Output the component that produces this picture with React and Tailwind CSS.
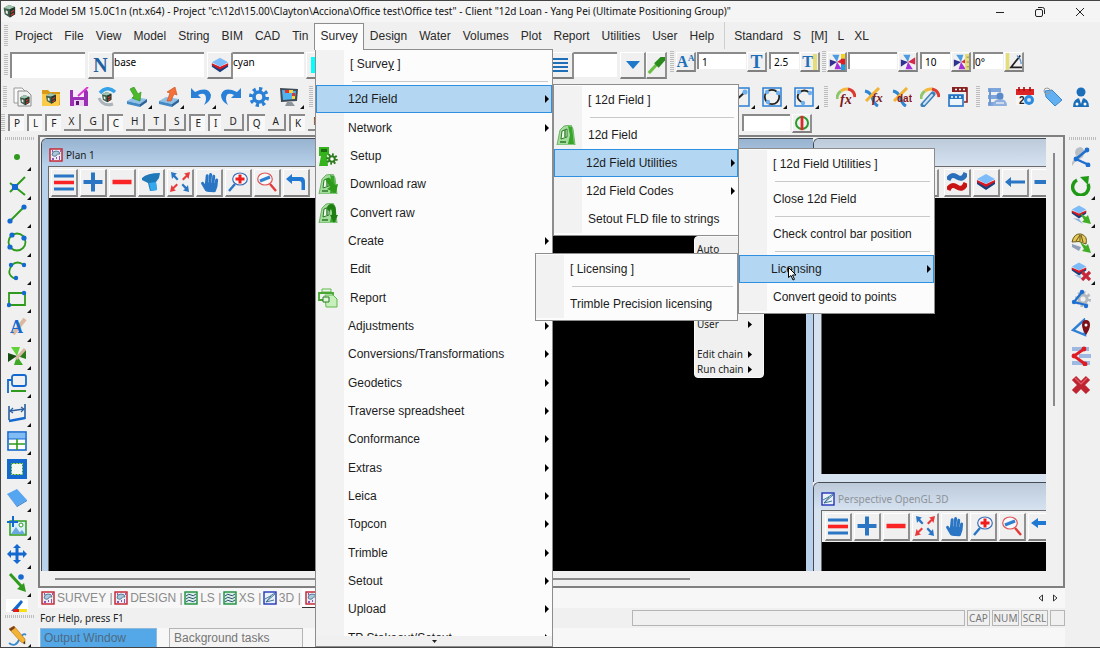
import { FaHandPaper } from "react-icons/fa"

const ui = "font-['Noto_Sans','Open_Sans',sans-serif]"

function Svg({ children, className = "size-[20px]", box = "0 0 20 20" }) {
  return (
    <svg viewBox={box} className={`${className} shrink-0`} fill="none" aria-hidden="true">
      {children}
    </svg>
  )
}

/* ---------- shared drawing parts, all on a 20 x 20 grid ---------- */

const Cube = ({ x = 6, y = 6, s = 1 }) => (
  <g transform={`translate(${x} ${y}) scale(${s})`}>
    <path d="M0 3 L5 0 L11 2 L11 9 L6 12 L1 9Z" fill="#3d5c4c" />
    <path d="M0 3 L5 0 L11 2 L6 4Z" fill="#9fc4b0" />
    <path d="M6 4 L11 2 L11 9 L6 12Z" fill="#22372c" />
    <path d="M2 5 L4 6 L4 9 L2 8Z" fill="#e8f3ec" />
    <path d="M7 7 L10 5 M7 10 L10 8" stroke="#c8372d" strokeWidth="1.3" />
  </g>
)

const Tray = () => (
  <g>
    <path d="M0 14 L7 10 L20 12 L13 17Z" fill="#8fc0e8" />
    <path d="M0 14 L13 17 L13 20 L0 17Z" fill="#4488c4" />
    <path d="M13 17 L20 12 L20 15 L13 20Z" fill="#2c6499" />
  </g>
)

const Layers = ({ y = 0 }) => (
  <g transform={`translate(0 ${y})`}>
    <path d="M1 9 L10 13 L19 9 L19 12 L10 18 L1 12Z" fill="#1b3f7c" />
    <path d="M1 8 L10 12 L19 8 L19 10 L10 15 L1 10Z" fill="#e0161f" />
    <path d="M1 7 L10 2 L19 7 L10 12Z" fill="#7dbcf8" />
  </g>
)

const Magnifier = ({ lens, handle, flip, children }) => (
  <g>
    <g transform={flip ? "translate(20 0) scale(-1 1)" : undefined}>
      <path d="M7 12 L1 19" stroke={handle} strokeWidth="2.4" />
      <ellipse cx="12" cy="7" rx="7.3" ry="6" stroke={lens} strokeWidth="1.2" fill="#f6f9fc" />
    </g>
    {children}
  </g>
)

const Pinwheel = ({ colors = ["#4c9be0", "#d42a4a", "#a431d8", "#31318f"] }) => (
  <g>
    <path d="M4 1 L13 1 L10 10Z" fill={colors[0]} />
    <path d="M19 4 L19 13 L10 10Z" fill={colors[1]} />
    <path d="M7 19 L16 19 L10 10Z" fill={colors[2]} />
    <path d="M1 7 L10 10 L1 16Z" fill={colors[3]} />
  </g>
)

const Station = () => (
  <g>
    <path d="M1 20 L4 5 L8 1 L15 0 L17 4 L19 20Z" fill="#a3dc9c" stroke="#58a650" strokeWidth=".8" />
    <path d="M12 1 L16 2 L18 19 L12 19 L14 10Z" fill="#36a52a" />
    <path d="M6 6 L11 4 L11 12 L5 14Z" fill="#effcec" stroke="#2b7a26" />
    <path d="M9 5v7M4 17h6" stroke="#2b7a26" strokeWidth="1.4" />
  </g>
)

const GearShape = ({ cx = 10, cy = 10, r = 8, w = 4, color = "#2a80d6", hole = "#f0f0f0" }) => (
  <g>
    <circle cx={cx} cy={cy} r={r} stroke={color} strokeWidth={w} pathLength="80" strokeDasharray="5 5" />
    <circle cx={cx} cy={cy} r={r * 0.85} fill={color} />
    <circle cx={cx} cy={cy} r={r * 0.4} fill={hole} />
  </g>
)

const Pencil = () => (
  <g>
    <path d="M2 3 L7 0 L18 13 L18 18 L14 16Z" fill="#f2b233" stroke="#b0741a" strokeWidth=".6" />
    <path d="M16 17 L18 18 L18 15Z" fill="#333" />
    <path d="M2 3 L7 0 L8 2 L4 5Z" fill="#7b3f1d" />
  </g>
)

const Rainbow = () => (
  <g strokeWidth="3">
    <path d="M1 12 A9 9 0 0 1 5 4" stroke="#8fc66a" />
    <path d="M5 4 A9 9 0 0 1 12 2" stroke="#f3b93c" />
    <path d="M12 2 A9 9 0 0 1 19 10" stroke="#dc3b30" />
  </g>
)

const Swoosh = () => <path d="M1 4 Q6 5 8 10 Q10 17 14 19" stroke="#2f86d2" strokeWidth="3" />

const Dots = ({ at, color = "#1469d0", r = 2.6 }) =>
  at.map(([x, y]) => <circle key={`${x}-${y}`} cx={x} cy={y} r={r} fill={color} />)

const PlanBadge = () => (
  <Svg className="size-[14px]" box="0 0 14 14">
    <rect x="1" y="1" width="12" height="12" fill="#e9eef3" stroke="#c41f2c" strokeWidth="1.4" />
    <path d="M3 7 Q3 3 7 3 Q11 3 11 6 Q8 5 7 8 Q5 9 3 7Z" fill="#a9c8dd" stroke="#375a75" strokeWidth=".7" />
    <path d="M3 11h2M7 10h1M10 9h1M10 11h1M3 3h1M11 3h1" stroke="#7b1fa2" strokeWidth="1.4" />
  </Svg>
)

const SectionBadge = () => (
  <Svg className="size-[14px]" box="0 0 14 14">
    <rect x="1" y="1" width="12" height="12" fill="#d9efe4" stroke="#1a8f3c" strokeWidth="1.4" />
    <path d="M2 5 Q5 2 7 4 T12 3 M2 8 Q5 5 7 7 T12 6 M2 11 Q5 8 7 10 T12 9" stroke="#2d4f78" />
  </Svg>
)

const ViewBadge = () => (
  <Svg className="size-[14px]" box="0 0 14 14">
    <rect x="1" y="1" width="12" height="12" fill="#eaf0fa" stroke="#2334b8" strokeWidth="1.4" />
    <path d="M3 11 L12 3 M3 11 L8 5 M3 11 L11 9 M2 8 Q6 6 12 2" stroke="#2f6a8c" strokeWidth=".9" />
  </Svg>
)

/* ---------- icon table ---------- */

const blue = "#1469d0"
const green = "#2f9a1c"

const icons = {
  newProject: (
    <g>
      <path d="M1 1h8l3 3v12H1z" fill="#fafafa" stroke="#9a9a9a" />
      <path d="M5 4h9l4 4v11H5z" fill="#f1f1f1" stroke="#8b8b8b" />
      <Cube x={7} y={8} s={0.85} />
    </g>
  ),
  open: (
    <g>
      <path d="M1 3h6l2 2h10v13H1z" fill="#d99a18" />
      <path d="M1 7h18l-1 12H1z" fill="#fbca49" />
      <Cube x={5} y={6} s={0.9} />
    </g>
  ),
  save: (
    <g>
      <path d="M1 3h17l1 2v14H1z" fill="#9b2fb5" />
      <path d="M4 3h11v7H4z" fill="#f6ecf9" />
      <path d="M5 13h10v6H5z" fill="#e9d3ef" />
      <path d="M7 14h3v4H7z" fill="#5d1470" />
      <path d="M19 0 L9 9" stroke="#d63ad0" strokeWidth="2" />
    </g>
  ),
  refresh: (
    <g>
      <path d="M3 6 Q10 -2 18 5" stroke="#37a2e8" strokeWidth="3.5" />
      <path d="M2 11 Q6 20 16 17" stroke="#aab3ba" strokeWidth="3" />
      <Cube x={5} y={5} s={0.85} />
    </g>
  ),
  importData: (
    <g>
      <Tray />
      <path d="M3 2 L7 0 L11 7 L14 5 L13 14 L5 11 L7 9Z" fill="#4cba2a" stroke="#2c8a15" strokeWidth=".6" />
    </g>
  ),
  exportData: (
    <g>
      <Tray />
      <path d="M8 14 L12 14 L15 7 L18 8 L16 0 L8 5 L11 6Z" fill="#f4713a" stroke="#c84a18" strokeWidth=".6" />
    </g>
  ),
  undo: <path d="M0 1 L0 11 L10 11 L7 8 Q15 4 15 12 Q15 15 13 18 Q20 14 20 8 Q17 -1 4 5Z" fill="#2a80d6" />,
  redo: <path d="M20 1 L20 11 L10 11 L13 8 Q5 4 5 12 Q5 15 7 18 Q0 14 0 8 Q3 -1 16 5Z" fill="#2a80d6" />,
  gear: <GearShape />,
  monitor: (
    <g>
      <path d="M1 1 L19 2 L18 14 L2 15Z" fill="#3e4b57" />
      <path d="M3 3 L17 4 L16 12 L4 13Z" fill="#4fb3f0" />
      <path d="M6 3h4v3H6z" fill="#e23232" />
      <path d="M10 3h4v3h-4z" fill="#f7d53a" />
      <path d="M13 6h3v3h-3z" fill="#e23232" />
      <path d="M13 9h3v3h-3z" fill="#f7d53a" />
      <path d="M8 15h5l3 4H6z" fill="#8e969d" />
    </g>
  ),
  boxLine: (
    <g>
      <rect x="1" y="1" width="18" height="18" stroke="#2a7fd4" strokeWidth="1.5" />
      <path d="M3 16 L15 5" stroke="#222" strokeWidth="2" />
      <Dots at={[[15, 5], [4, 16]]} color="#6fb0ee" />
    </g>
  ),
  boxCircle: (
    <g>
      <rect x="1" y="1" width="18" height="18" stroke="#2a7fd4" strokeWidth="1.5" />
      <circle cx="10" cy="10" r="7.2" stroke="#222" strokeWidth="1.8" />
      <Dots at={[[5, 5], [16, 6], [6, 15]]} color="#6fb0ee" r={2.2} />
    </g>
  ),
  boxArc: (
    <g>
      <rect x="1" y="1" width="18" height="18" stroke="#2a7fd4" strokeWidth="1.5" />
      <path d="M16 6 Q10 1 5 6 Q1 12 9 16" stroke="#222" strokeWidth="1.8" />
      <Dots at={[[5, 5], [16, 6], [9, 16]]} color="#6fb0ee" r={2.2} />
    </g>
  ),
  rainbowFx: (
    <g>
      <Rainbow />
      <text x="4" y="17" fontSize="14" fontWeight="700" fontStyle="italic" fontFamily="Liberation Serif" fill="#7c1a1a">fx</text>
    </g>
  ),
  pencilFx: (
    <g>
      <Swoosh />
      <path d="M2 14 L15 1" stroke="#f2b233" strokeWidth="3" />
      <text x="8" y="15" fontSize="13" fontWeight="700" fontStyle="italic" fontFamily="Liberation Serif" fill="#7c1a1a">fx</text>
    </g>
  ),
  pencilDat: (
    <g>
      <Swoosh />
      <path d="M2 14 L15 1" stroke="#f2b233" strokeWidth="3" />
      <text x="5" y="15" fontSize="10" fontWeight="700" fontFamily="Liberation Sans" fill="#8a1717">dat</text>
    </g>
  ),
  rainbowLink: (
    <g>
      <Rainbow />
      <path d="M3 18 L13 7" stroke="#3d7fb8" strokeWidth="5" strokeLinecap="round" />
      <path d="M4 17 L12 8" stroke="#cfe3f2" strokeWidth="2" strokeLinecap="round" />
    </g>
  ),
  windows: (
    <g>
      <path d="M4 1h15v14h-3" stroke="#8a2020" strokeWidth="1.6" />
      <path d="M4 0h15v5H4z" fill="#8a2020" />
      <path d="M7 2.500h2M11 2.500h2M15 2.500h2" stroke="#fff" strokeWidth="1.6" />
      <rect x="1" y="8" width="14" height="11" fill="#eef5fb" stroke="#2274c4" strokeWidth="1.6" />
      <path d="M1 8h14v4H1z" fill="#2274c4" />
      <path d="M3 10h2M7 10h2M11 10h2" stroke="#fff" strokeWidth="1.6" />
    </g>
  ),
  cards: (
    <g>
      <path d="M1 1h13v4H1zM1 8h15v4H1zM1 15h12v4H1z" fill="#7fa6dc" />
      <path d="M3 2v16" stroke="#6f97cf" strokeWidth="2" />
      <path d="M6 19 Q6 12 13 12 Q20 12 20 19Z" fill="#8fb0dd" />
      <circle cx="13" cy="9" r="3.500" fill="#5b89c9" />
      <path d="M9 16h8" stroke="#dfe9f6" strokeWidth="1.5" />
    </g>
  ),
  calendar: (
    <g>
      <path d="M1 2h18v16H1z" fill="#f6f6f6" />
      <path d="M1 2h18v6H1z" fill="#dc2424" />
      <path d="M4 0v4M9 0v4M15 0v4" stroke="#a31010" strokeWidth="1.6" />
      <text x="4" y="17" fontSize="10" fontWeight="700" fontFamily="Liberation Sans" fill="#222">2</text>
      <circle cx="14" cy="13" r="5" fill="#2c8be0" />
      <circle cx="14" cy="13" r="2" fill="#cfe6fa" />
    </g>
  ),
  tag: (
    <g>
      <path d="M2 4 L9 3 L19 13 L12 19 L3 10Z" fill="#62b0f2" stroke="#3b86cb" />
      <circle cx="4" cy="4" r="3" stroke="#9a9a9a" />
    </g>
  ),
  person: (
    <g>
      <circle cx="10" cy="5" r="4.500" fill="#1b6fb8" />
      <path d="M2 20 Q2 11 10 11 Q18 11 18 20Z" fill="#1b6fb8" />
      <path d="M8 11l2 6 2-6" fill="#f0f0f0" />
      <circle cx="6" cy="17" r="1.500" fill="#fff" />
      <circle cx="14" cy="17" r="1.500" fill="#fff" />
    </g>
  ),

  /* view window buttons */
  menu: (
    <g strokeWidth="3.2">
      <path d="M0 4h20M0 17h20" stroke="#2a76c4" />
      <path d="M0 10.500h20" stroke="#fb2424" strokeWidth="3.600" />
    </g>
  ),
  plus: <path d="M10 0.500v19M0.500 10h19" stroke="#2a76c4" strokeWidth="4" />,
  minus: <path d="M0.500 10h19" stroke="#fb2424" strokeWidth="4.500" />,
  funnel: (
    <g>
      <path d="M1 6 Q6 1 19 1 L18 6 L15 10 L16 18 L9 19 L7 11 L1 8Z" fill="#1f78b8" />
      <path d="M8 11 L15 10 L16 18 L10 19Z" fill="#35a9ee" />
    </g>
  ),
  fit: (
    <g>
      <path d="M1 0 L7 1.500 L5 3 L8.500 7 L7 8.500 L3.500 5 L2 7Z M19 20 L13 18.500 L15 17 L11.500 13 L13 11.500 L16.500 15 L18 13Z" fill="#2a76c4" />
      <path d="M20 0 L14 1.500 L16 3 L12 7 L13.500 8.500 L17 5 L18.500 7Z M0 20 L6 18.500 L4 17 L8 13 L6.500 11.500 L3 15 L1.500 13Z" fill="#e83a3a" />
    </g>
  ),
  zoomIn: (
    <Magnifier lens="#3f6fb5" handle="#2a76c4">
      <path d="M12 2.500v9M7.500 7h9" stroke="#f01c1c" strokeWidth="3" />
    </Magnifier>
  ),
  zoomOut: (
    <Magnifier lens="#e25555" handle="#e23a3a" flip>
      <path d="M3 9 L13 5" stroke="#2f7fd0" strokeWidth="3" />
    </Magnifier>
  ),
  back: <path d="M0 7 L6 2 L6 5 L15 5 Q19 5 19 10 L19 18 L15.500 18 L15.500 11 Q15.500 9 13 9 L6 9 L6 12Z" fill="#1f78d1" />,
  backCut: <path d="M0 7 L7 2 L7 5 L20 5 L20 9 L7 9 L7 12Z" fill="#1f78d1" />,
  arrowLeft: <path d="M0 10 L6 5 L6 8.500 L20 8.500 L20 11.500 L6 11.500 L6 15Z" fill="#2a76c4" />,
  waves: (
    <g strokeWidth="5">
      <path d="M1 8 Q4 1 10 5 T19 1" stroke="#2a6fbb" />
      <path d="M1 18 Q4 11 10 15 T19 11" stroke="#c81414" />
    </g>
  ),
  layers: <Layers />,
  dash: <path d="M0.500 10h19" stroke="#2a76c4" strokeWidth="4" />,

  /* left tool column */
  point: <circle cx="10" cy="10" r="3" fill="#2f9a1c" />,
  vertex: (
    <g>
      <path d="M3 7 L8 11 L18 1 M8 11 L3 16 M8 11 L18 19" stroke={green} strokeWidth="2" />
      <path d="M5 8h6v6H5z" fill={blue} />
    </g>
  ),
  line: (
    <g>
      <path d="M3 17 L17 3" stroke={green} strokeWidth="2" />
      <Dots at={[[3, 17], [17, 3]]} />
    </g>
  ),
  circle: (
    <g>
      <circle cx="10" cy="10" r="8.500" stroke={green} strokeWidth="1.800" />
      <Dots at={[[5, 3], [17, 6], [3, 15]]} />
    </g>
  ),
  arc: (
    <g>
      <path d="M17 4 Q10 -1 5 4 Q-2 14 9 18" stroke={green} strokeWidth="1.800" />
      <Dots at={[[4, 4], [17, 4], [9, 17]]} r={2.2} />
    </g>
  ),
  rect: (
    <g>
      <path d="M2 4h16v12H2z" stroke={green} strokeWidth="1.800" />
      <Dots at={[[17, 4], [2, 16]]} r={2.2} />
    </g>
  ),
  text: (
    <g>
      <path d="M6 17 L18 2" stroke="#dcb8a0" strokeWidth="4" />
      <text x="3" y="16" fontSize="18" fontWeight="700" fontFamily="Liberation Serif" fill={blue}>A</text>
    </g>
  ),
  symbol: (
    <g>
      <Pinwheel colors={["#63d13a", "#2b7a1c", "#3fa828", "#174d10"]} />
      <path d="M9 13 L18 3" stroke="#d8b79f" strokeWidth="3" />
    </g>
  ),
  leader: (
    <g>
      <rect x="5" y="1" width="14" height="11" rx="2" stroke={blue} strokeWidth="1.800" />
      <path d="M5 6H1v13" stroke={blue} strokeWidth="1.800" />
      <path d="M4 17h15" stroke={green} strokeWidth="2" />
    </g>
  ),
  dimension: (
    <g stroke="#2a5fa0">
      <path d="M2 3v14M18 1v15M3 8 L17 6" strokeWidth="1.600" />
      <path d="M6 5 L3 8 L6 10M14 4 L17 6 L14 9" strokeWidth="1.200" />
      <path d="M2 18 L18 15" stroke={blue} strokeWidth="2.500" />
    </g>
  ),
  table: (
    <g>
      <rect x="1" y="1" width="18" height="18" fill="#fff" stroke={blue} strokeWidth="1.600" />
      <path d="M2 2h16v6H2z" fill="#7fbcf5" />
      <path d="M1 8h18" stroke={blue} />
      <path d="M10 8v11M2 13h16" stroke={green} strokeWidth="1.600" />
    </g>
  ),
  frame: (
    <g>
      <rect x="2" y="2" width="16" height="16" fill="#f4f8f2" stroke={blue} strokeWidth="4" />
      <rect x="4.500" y="4.500" width="11" height="11" stroke={green} strokeDasharray="2 1" />
    </g>
  ),
  plane: (
    <g>
      <path d="M0 6 L10 1 L20 12 L10 18Z" fill="#56a5f0" />
      <path d="M20 12 L10 18 L0 6 L10 19 L20 13Z" fill="#2c74c4" />
    </g>
  ),
  image: (
    <g>
      <rect x="3" y="5" width="16" height="14" fill="#d9efff" stroke={green} strokeWidth="1.500" />
      <path d="M4 18 L9 11 L14 18Z M11 18 L15 14 L18 18Z" fill="#6aa9e0" />
      <circle cx="14" cy="9" r="2" fill="#fff" stroke={green} />
      <path d="M6 0v11M0 6h11" stroke={blue} strokeWidth="2" />
    </g>
  ),
  move: (
    <g>
      <path d="M10 2v16M2 10h16" stroke={blue} strokeWidth="3" />
      <path d="M10 0l4 4H6zM10 20l4-4H6zM0 10l4-4v8zM20 10l-4-4v8z" fill={blue} />
    </g>
  ),
  translate: (
    <g>
      <path d="M3 1 L15 14" stroke={green} strokeWidth="3" />
      <path d="M19 19 L10 16 L17 10Z" fill={green} />
      <circle cx="14" cy="4" r="2.800" fill={blue} />
    </g>
  ),
  sketch: (
    <g>
      <path d="M2 17 Q8 22 12 14 T19 9" stroke="#3a8ad0" strokeWidth="1.800" />
      <Pencil />
    </g>
  ),

  /* right tool column */
  nodeGray: (
    <g>
      <path d="M4 6 Q4 0 10 0 Q15 2 12 10 L4 15 L1 19 Q0 13 6 11Z" fill="#b9bec4" />
      <path d="M16 3 L5 12 L18 18" stroke="#1f6fd0" strokeWidth="2.4" />
      <Dots at={[[16, 3], [5, 12], [17, 18]]} r={2.4} color="#1f6fd0" />
    </g>
  ),
  reload: (
    <g>
      <path d="M6 4 A8 8 0 1 0 17 8" stroke="#1f9a14" strokeWidth="3.500" />
      <path d="M9 1 L18 0 L17 9Z" fill="#1f9a14" />
    </g>
  ),
  layerGo: (
    <g>
      <g transform="scale(.8)"><Layers /></g>
      <path d="M2 14 L12 20 L8 15Z" fill="#8fb0dd" />
      <path d="M9 9 L15 13 L17 11 L20 20 L11 18 L13 16Z" fill="#3fae24" />
    </g>
  ),
  shellGo: (
    <g>
      <path d="M1 9 Q3 0 10 1 Q17 3 15 11 Q8 7 1 9Z" fill="#e3c85a" stroke="#6b5817" />
      <path d="M5 8 L9 2 L9 8 M12 9 L10 2" stroke="#6b5817" />
      <path d="M1 11 L10 14 L8 18 L1 14Z" fill="#8f9fb5" />
      <path d="M9 9 L15 13 L17 11 L20 20 L11 18 L13 16Z" fill="#3fae24" />
    </g>
  ),
  layerDelete: (
    <g>
      <g transform="scale(.8)"><Layers /></g>
      <path d="M3 14 L12 19 L9 14Z" fill="#a9c3e4" />
      <path d="M11 11 L19 19 M19 11 L11 19" stroke="#c6283a" strokeWidth="3.200" />
    </g>
  ),
  nodeGear: (
    <g>
      <GearShape cx={12} cy={10} r={6.5} w={3} color="#b3b9bf" />
      <path d="M11 3 L3 13 L15 16" stroke="#1f6fd0" strokeWidth="2.2" />
      <Dots at={[[11, 3], [3, 13], [15, 17]]} r={2.2} color="#1f6fd0" />
    </g>
  ),
  nodePin: (
    <g>
      <path d="M13 2 L2 12 L14 17Z" stroke="#2f7fd6" strokeWidth="2.400" />
      <path d="M11 7 Q11 2 15 2 Q19 2 19 7 Q19 11 15 17 Q11 11 11 7Z" fill="#7d0f18" />
      <circle cx="15" cy="7" r="1.500" fill="#fff" />
    </g>
  ),
  nodeRed: (
    <g>
      <path d="M1 1h17v4H1zM8 8h12v4H8zM1 15h18v4H1z" fill="#9db9e2" />
      <path d="M13 3 L3 10 L14 18" stroke="#dd1c24" strokeWidth="2.800" />
      <Dots at={[[13, 3], [3, 10], [14, 18]]} r={2.4} color="#dd1c24" />
    </g>
  ),
  cross: (
    <g>
      <path d="M3 3 L17 17 M17 3 L3 17" stroke="#bf2431" strokeWidth="6" />
      <path d="M4 3 L10 9 L16 3" stroke="#e0616b" strokeWidth="1.200" />
    </g>
  ),

  /* survey menu */
  setup: (
    <g>
      <path d="M1 1h10v8H9l1 11H1l2-10H1z" fill="#35b31c" />
      <path d="M3 3h6v3H3z" fill="#1c6b10" />
      <GearShape cx={14} cy={13} r={4.500} w={2.500} color="#2d7a1f" hole="#fff" />
    </g>
  ),
  station: <Station />,
  download: (
    <g>
      <Station />
      <path d="M7 5 L12 4 L16 11 L20 10 L18 19 L9 15 L12 13Z" fill="#2e9a1a" />
    </g>
  ),
  convert: (
    <g>
      <Station />
      <path d="M9 6 Q9 1 14 1 Q18 2 18 8 L18 12 L20 12 L16 20 L12 12 L14 12 L14 7 Q12 5 12 9Z" fill="#1f7f12" />
    </g>
  ),
  report: (
    <g>
      <path d="M4 1h9v3H4z" stroke="#5fb84a" />
      <path d="M1 5h14v7H1z" stroke="#48a832" strokeWidth="1.800" />
      <path d="M7 7h8l4 4v8H8z" fill="#c8f0bd" stroke="#5fb84a" />
      <path d="M5 9h6v5H5z" fill="#dff7d8" stroke="#2b7a26" />
    </g>
  ),
}

/* ---------- small building blocks ---------- */

const Grip = ({ className }) => (
  <div className={`flex shrink-0 items-center justify-center ${className}`}>
    <div className="h-[22px] w-[4px] bg-[repeating-linear-gradient(180deg,#bdbdbd_0_1px,#f0f0f0_1px_2px)]" />
  </div>
)

const raised = "border-t border-l border-r-2 border-b-2 border-t-white border-l-white border-r-[#909090] border-b-[#808080] bg-[#f0f0f0]"

function Tool({ icon, label, corner, className = "" }) {
  return (
    <button aria-label={label || icon} className={`relative flex shrink-0 items-center justify-center ${className}`}>
      <Svg>{icons[icon]}</Svg>
      {corner && (
        <Svg className="absolute right-[1px] bottom-0 size-[4px]" box="0 0 4 4">
          <path d="M4 0v4H0z" fill="#111" />
        </Svg>
      )}
    </button>
  )
}

function SmallButton({ label, children, className = "h-[20px] w-[20px]" }) {
  return (
    <button aria-label={label} className={`flex shrink-0 items-center justify-center ${raised} ${className}`}>
      {children}
    </button>
  )
}

function Field({ label, value = "", className = "" }) {
  return (
    <input
      aria-label={label}
      defaultValue={value}
      className={`shrink-0 border-t-2 border-[#8a8a8a] bg-white text-[10px] text-black outline-none ${ui} ${className}`}
    />
  )
}

function ViewButton({ icon }) {
  return (
    <button aria-label={icon} className={`flex h-[28px] w-[27px] shrink-0 items-center justify-center ${raised}`}>
      {icon === "hand" ? <FaHandPaper className="size-[19px] rotate-6 text-[#2a76c4]" /> : <Svg>{icons[icon]}</Svg>}
    </button>
  )
}

function ViewWindow({ title, badge, tools, active, className = "", frame }) {
  return (
    <section className={`flex min-h-0 min-w-0 flex-col overflow-hidden rounded-tl-md border-t border-l border-[#454b52] ${frame} ${className}`}>
      <header
        className={`flex h-[27px] shrink-0 items-center gap-[3px] bg-linear-to-b pt-[5px] text-[10px] ${ui} ${
          active ? "from-[#97b3d0] to-[#b9d1ea] text-[#1a1a1a]" : "from-[#bccada] to-[#d6e2f0] text-[#8e9399]"
        } pl-[7px]`}
      >
        {badge}
        <h2>{title}</h2>
      </header>
      <div className={`flex min-h-0 flex-1 ${active ? "pr-[7px] pl-[6px]" : "pl-[7px]"}`}>
        <div className="flex min-w-0 flex-1 flex-col border-t border-l border-[#6b6b6b]">
          <div className={`flex h-[31px] shrink-0 items-center gap-[2px] overflow-hidden bg-[#f0f0f0] ${active ? "pl-[2px]" : "pl-[3px]"}`}>
            {tools.map((tool, i) => (tool === "|" ? <i key={i} className="w-[1px] shrink-0" /> : <ViewButton key={i} icon={tool} />))}
          </div>
          <div className="flex-1 bg-black" />
        </div>
      </div>
    </section>
  )
}

function MenuItem({ label, icon, sub, open, className = "h-[28px]" }) {
  return (
    <button
      role="menuitem"
      className={`flex w-full items-center text-left text-xs whitespace-nowrap text-[#1c1c1c] ${
        open ? "bg-[#b3d7f3] outline outline-offset-[-1px] outline-[#2f8fe0]" : "bg-[#fcfcfc]"
      } ${className}`}
    >
      <span className={`flex w-[28px] shrink-0 items-center self-stretch pl-[2px] ${open ? "" : "bg-[#f2f2f2]"}`}>
        {icon && <Svg>{icons[icon]}</Svg>}
      </span>
      <span className={`flex-1 ${sub ? "pl-[4px]" : "pl-[6px]"}`}>{label}</span>
      {sub && (
        <Svg className="mr-[2px] h-[8px] w-[5px]" box="0 0 5 8">
          <path d="M0 0l4 4-4 4z" fill="#000" />
        </Svg>
      )}
    </button>
  )
}

const Separator = () => (
  <div className="flex h-[7px] w-full shrink-0 items-center bg-[#fcfcfc] pr-[4px]">
    <span className="w-[28px] shrink-0 self-stretch bg-[#f2f2f2]" />
    <span className="ml-[8px] h-[1px] flex-1 bg-[#c9c9c9]" />
  </div>
)

function PopupMenu({ items, className }) {
  return (
    <div role="menu" className={`absolute border border-[#8d8d8d] bg-[#fcfcfc] pt-px pb-[2px] ${className}`}>
      {items.map((item, i) => (item === "-" ? <Separator key={i} /> : <MenuItem key={i} {...item} />))}
    </div>
  )
}

/* ---------- data ---------- */

const menuBar = ["Project", "File", "View", "Model", "String", "BIM", "CAD", "Tin", "Survey", "Design", "Water", "Volumes", "Plot", "Report", "Utilities", "User", "Help"]
const layoutBar = ["Standard", "S", "[M]", "L", "XL"]

const mainTools = [
  ["newProject"], ["open"], ["save"], ["refresh"], ["importData", true], ["exportData", true],
  ["undo", true], ["redo"], ["gear"], ["monitor", true],
]

const snaps = [
  ["P", true], ["L", true], ["F", true], ["X"], ["G"], ["C", true], ["H"], ["T"], ["S"],
  ["E", true], ["I", true], ["D"], ["Q", true], ["A"], ["K", true], ["M"],
]

const drawTools = ["point", "vertex", "line", "circle", "arc", "rect", "text", "symbol", "leader", "dimension", "table", "frame", "plane", "image", "move", "translate"]
const editTools = ["nodeGray", "reload", "layerGo", "shellGo", "layerDelete", "nodeGear", "nodePin", "nodeRed", "cross"]

const surveyItems = [
  { label: "12d Field", sub: true, open: true },
  { label: "Network", sub: true },
  { label: "Setup", icon: "setup" },
  { label: "Download raw", icon: "download" },
  { label: "Convert raw", icon: "convert" },
  { label: "Create", sub: true },
  { label: "Edit" },
  { label: "Report", icon: "report" },
  { label: "Adjustments", sub: true },
  { label: "Conversions/Transformations", sub: true },
  { label: "Geodetics", sub: true },
  { label: "Traverse spreadsheet", sub: true },
  { label: "Conformance", sub: true },
  { label: "Extras", sub: true },
  { label: "Leica", sub: true },
  { label: "Topcon", sub: true },
  { label: "Trimble", sub: true },
  { label: "Setout", sub: true },
  { label: "Upload", sub: true },
  { label: "TP Stakeout/Setout", sub: true },
]

const fieldItems = [
  { label: "[ 12d Field ]" },
  "-",
  { label: "12d Field", icon: "station" },
  { label: "12d Field Utilities", sub: true, open: true },
  { label: "12d Field Codes", sub: true },
  { label: "Setout FLD file to strings" },
]

const utilityItems = [
  { label: "[ 12d Field Utilities ]" },
  "-",
  { label: "Close 12d Field" },
  "-",
  { label: "Check control bar position" },
  "-",
  { label: "Licensing", sub: true, open: true },
  { label: "Convert geoid to points" },
]

const licensingItems = [{ label: "[ Licensing ]" }, "-", { label: "Trimble Precision licensing" }]

const viewTabs = [
  ["SURVEY", <PlanBadge />],
  ["DESIGN", <PlanBadge />],
  ["LS", <SectionBadge />],
  ["XS", <SectionBadge />],
  ["3D", <ViewBadge />],
]

/* ---------- page sections ---------- */

function TitleBar() {
  return (
    <header className="flex h-[21px] shrink-0 items-center bg-[#f5f5f5] pl-[2px]">
      <Svg className="size-[13px]">
        <Cube x={1} y={0} s={1.6} />
      </Svg>
      <h1 className={`flex-1 pl-[3px] text-[10px] whitespace-nowrap text-[#111] ${ui}`}>
        {'12d Model 5M 15.0C1n (nt.x64) - Project "c:\\12d\\15.00\\Clayton\\Acciona\\Office test\\Office test" - Client "12d Loan - Yang Pei (Ultimate Positioning Group)"'}
      </h1>
      <div className="flex">
        <button aria-label="Minimize" className="flex w-[40px] justify-center">
          <Svg className="size-[10px]" box="0 0 10 10"><path d="M1 5.500h8" stroke="#222" /></Svg>
        </button>
        <button aria-label="Restore" className="flex w-[40px] justify-center">
          <Svg className="size-[10px]" box="0 0 10 10">
            <rect x=".5" y="2.500" width="7" height="7" rx="1.500" stroke="#222" />
            <path d="M3 .5h4.500q2 0 2 2V7" stroke="#222" />
          </Svg>
        </button>
        <button aria-label="Close" className="flex w-[40px] justify-center">
          <Svg className="size-[10px]" box="0 0 10 10"><path d="M1 1l8 8M9 1L1 9" stroke="#222" /></Svg>
        </button>
      </div>
    </header>
  )
}

function MenuBar() {
  return (
    <nav className="flex h-[27px] shrink-0 items-stretch pl-[2px] text-xs text-[#2a2a2a]">
      <Grip className="w-[6px]" />
      {menuBar.map((name) => (
        <button
          key={name}
          className={
            name === "Survey"
              ? "z-20 mt-[1px] mb-[-1px] border border-b-0 border-[#8d8d8d] bg-[#fcfcfc] px-[5px] pb-[2px]"
              : "px-[6px]"
          }
        >
          {name}
        </button>
      ))}
      <div className="mx-[4px] w-[1px] bg-[#cfcfcf]" />
      {layoutBar.map((name) => (
        <button key={name} className="px-[5px]">{name}</button>
      ))}
    </nav>
  )
}

function PropertyBar() {
  return (
    <div className="flex h-[32px] shrink-0 items-start pt-[3px]">
      <div className="flex w-[544px] shrink-0 items-start">
        <Grip className="h-[26px] w-[9px]" />
        <Field label="String name" className="mr-[3px] h-[26px] w-[75px] border-l-2" />
        <SmallButton label="Name list" className="h-[27px] w-[26px]">
          <span className="font-['Liberation_Serif',serif] text-xl font-bold text-[#1f5f9e]">N</span>
        </SmallButton>
        <Field label="Name" value="base" className="mr-[3px] h-[25px] w-[90px] pb-[7px]" />
        <SmallButton label="Colour list" className="h-[27px] w-[26px]">
          <Svg className="size-[18px]">{icons.layers}</Svg>
        </SmallButton>
        <Field label="Colour" value="cyan" className="mr-[2px] h-[25px] w-[71px] pb-[7px]" />
        <SmallButton label="Pick colour" className="h-[27px] w-[27px]">
          <span className="size-[16px] bg-[#00ffff]" />
        </SmallButton>
      </div>
      <SmallButton label="Line style" className="h-[27px] w-[29px]">
        <Svg className="h-[16px] w-[18px]" box="0 0 18 16">
          <path d="M0 2h18M0 6h18M0 10h18M0 14h18" stroke="#1f6fb8" strokeWidth="2" />
        </Svg>
      </SmallButton>
      <Field label="Style" className="mr-[3px] h-[25px] w-[43px]" />
      <SmallButton label="More styles" className="h-[27px] w-[26px]">
        <Svg className="h-[8px] w-[14px]" box="0 0 14 8"><path d="M0 0h14L7 8z" fill="#1f78c8" /></Svg>
      </SmallButton>
      <SmallButton label="Eyedropper" className="h-[27px] w-[21px]">
        <Svg className="size-[18px]">
          <path d="M2 19 L12 8" stroke="#6bbf45" strokeWidth="3.500" />
          <path d="M8 8 L15 1 L20 1 L20 5 L13 13Z" fill="#2a8a1c" />
        </Svg>
      </SmallButton>
      <Grip className="h-[20px] w-[9px]" />
      <div className="flex gap-[1px]">
        <SmallButton label="Text style">
          <span className="flex items-start font-['Liberation_Serif',serif] leading-none font-bold text-[#1f6fb8]">
            <span className="text-base leading-none">A</span>
            <span className="text-[9px] leading-none">A</span>
          </span>
        </SmallButton>
        <Field label="Text style name" value="1" className="h-[17px] w-[49px] border-l-2 pl-[3px]" />
        <SmallButton label="Text height">
          <span className="font-['Liberation_Serif',serif] text-lg leading-none font-bold text-[#1f6fb8]">T</span>
        </SmallButton>
        <Field label="Text size" value="2.5" className="ml-[1px] h-[17px] w-[30px] border-l-2 pl-[3px]" />
        <SmallButton label="Text size picker">
          <span className="border-r-4 border-[#e5dc7a] font-['Liberation_Serif',serif] text-base leading-none font-bold text-[#1f6fb8]">T</span>
        </SmallButton>
      </div>
      <Grip className="h-[20px] w-[7px]" />
      <div className="flex gap-[1px]">
        <SmallButton label="Symbol colour">
          <Svg className="size-[16px]"><Pinwheel /><path d="M15 0h5v20h-5z" fill="#1f9fe0" /><path d="M15 0h5v6h-5z" fill="#f6d21c" /><path d="M15 6h5v7h-5z" fill="#e21c1c" /></Svg>
        </SmallButton>
        <Field label="Symbol" className="h-[17px] w-[49px] border-l-2" />
        <SmallButton label="Symbol list"><Svg className="size-[16px]"><Pinwheel /></Svg></SmallButton>
        <Field label="Symbol size" value="10" className="ml-[1px] h-[17px] w-[30px] border-l-2 pl-[3px]" />
        <SmallButton label="Symbol size picker">
          <Svg className="size-[16px]"><Pinwheel /><path d="M15 0h5v20h-5z" fill="#e5dc7a" /><path d="M17 4h3M17 10h3M17 16h3" stroke="#8a8230" /></Svg>
        </SmallButton>
        <Field label="Angle" value="0°" className="ml-[1px] h-[17px] w-[30px] border-l-2" />
        <SmallButton label="Angle picker">
          <Svg className="size-[17px]">
            <path d="M1 0h4v20H1z" fill="#e5dc7a" />
            <path d="M18 3 L7 17 L20 17" stroke="#222" strokeWidth="2" />
            <path d="M14 3 Q19 7 19 13" stroke="#5a93d0" strokeWidth="1.500" />
          </Svg>
        </SmallButton>
      </div>
    </div>
  )
}

function ToolBar() {
  return (
    <div className="flex h-[33px] shrink-0 items-center pb-[1px]">
      <div className="flex w-[723px] shrink-0 items-center">
        <Grip className="w-[8px]" />
        {mainTools.map(([icon, corner]) => (
          <Tool key={icon} icon={icon} corner={corner} className={corner ? "h-[24px] w-[32px]" : "h-[24px] w-[28px]"} />
        ))}
        <Grip className="w-[12px]" />
      </div>
      {["boxLine", "boxCircle", "boxArc"].map((icon) => (
        <Tool key={icon} icon={icon} corner className="h-[24px] w-[32px]" />
      ))}
      <Grip className="w-[12px]" />
      {["rainbowFx", "pencilFx", "pencilDat", "rainbowLink", "windows"].map((icon) => (
        <Tool key={icon} icon={icon} className="h-[24px] w-[28px]" />
      ))}
      <Grip className="w-[11px]" />
      {["cards", "calendar", "tag", "person"].map((icon) => (
        <Tool key={icon} icon={icon} className="h-[24px] w-[28px]" />
      ))}
    </div>
  )
}

function SnapBar() {
  return (
    <div className="flex h-[21px] shrink-0 items-start">
      <div className={`flex w-[741px] shrink-0 gap-[3px] text-[10px] text-[#222] ${ui}`}>
        <Grip className="h-[17px] w-[4px] overflow-hidden" />
        {snaps.map(([letter, down]) => (
          <button
            key={letter}
            aria-pressed={!!down}
            className={`flex h-[17px] items-center border-[#8a8a8a] ${
              down ? "border-t-2 border-l-2 bg-[#f8f8f8] px-[4px]" : "border-r-2 border-b-2 bg-[#f0f0f0] px-[5px]"
            }`}
          >
            {letter}
          </button>
        ))}
      </div>
      <Field label="Snap tolerance" className="mr-[2px] h-[17px] w-[48px] border-l-2" />
      <SmallButton label="Snap toggle" className="h-[19px] w-[20px]">
        <Svg className="size-[16px]">
          <circle cx="10" cy="10" r="7.500" stroke="#2a9a2a" strokeWidth="2.500" />
          <path d="M10 1v18" stroke="#d82a2a" strokeWidth="3.500" />
        </Svg>
      </SmallButton>
    </div>
  )
}

const DotRow = () => (
  <div className="mx-[4px] h-[3px] shrink-0 bg-[repeating-linear-gradient(90deg,#bdbdbd_0_1px,#f0f0f0_1px_2px)]" />
)

function DrawColumn() {
  return (
    <aside className="flex w-[37px] shrink-0 flex-col overflow-hidden pt-[2px]">
      <DotRow />
      <div className="mt-[3px] flex h-[454px] shrink-0 flex-col">
        {drawTools.map((icon) => (
          <Tool key={icon} icon={icon} corner className="w-[31px] flex-1" />
        ))}
      </div>
      <div className="mt-[2px] ml-[5px] flex h-[13px] w-[22px] shrink-0 items-end justify-center overflow-hidden bg-white">
        <Svg className="h-[12px] w-[20px]" box="0 0 20 12">
          <path d="M4 11 L14 0 L16 2 L9 11Z" fill={blue} />
          <path d="M6 9h6v3H6z" fill="#e21c1c" />
          <path d="M12 9h8v3h-8z" fill="#f6e01c" />
        </Svg>
      </div>
      <div className="mt-[3px]">
        <DotRow />
      </div>
      <Tool icon="sketch" corner className="mt-[6px] h-[24px] w-[31px]" />
    </aside>
  )
}

function EditColumn() {
  return (
    <aside className="flex w-[35px] shrink-0 flex-col pt-[2px]">
      <DotRow />
      <div className="mt-[3px] flex h-[256px] flex-col">
        {editTools.map((icon, i) => (
          <Tool key={icon} icon={icon} corner={i > 0 && i < 5} className="w-[31px] flex-1" />
        ))}
      </div>
    </aside>
  )
}

function Workspace() {
  return (
    <div className="flex min-h-0 flex-1 flex-col border-2 border-[#808080] bg-[#f0f0f0] pt-[1px] pl-[1px]">
      <div className="flex min-h-0 flex-1">
        <div className="grid min-w-0 flex-1 grid-cols-[772fr_233fr]">
          <ViewWindow
            title="Plan 1"
            badge={<PlanBadge />}
            active
            frame="bg-[#b9d1ea]"
            tools={["menu", "plus", "minus", "funnel", "fit", "hand", "zoomIn", "zoomOut", "back"]}
          />
          <div className="flex min-h-0 min-w-0 flex-col">
            <ViewWindow
              title=""
              frame="bg-[#d6e2f0]"
              className="flex-1 pb-[8px]"
              tools={["menu", "plus", "minus", "fit", "|", "waves", "layers", "arrowLeft", "dash"]}
            />
            <ViewWindow
              title="Perspective OpenGL 3D"
              badge={<ViewBadge />}
              frame="bg-[#d6e2f0]"
              className="h-[89px]"
              tools={["menu", "plus", "minus", "fit", "hand", "zoomIn", "zoomOut", "backCut"]}
            />
          </div>
        </div>
        <div className="flex w-[17px] shrink-0 justify-center pt-[15px] pr-[2px]">
          <div className="h-[253px] w-[2px] bg-[#8a8a8a]" />
        </div>
      </div>
      <div className="flex h-[15px] shrink-0 items-center pl-[14px]">
        <div className="h-[2px] w-[63%] bg-[#8a8a8a]" />
      </div>
    </div>
  )
}

function Footer() {
  return (
    <footer className="shrink-0 bg-[#f7f7f7]">
      <div className="flex h-[20px] items-center pl-[3px] text-xs text-[#8b8b8b]">
        {viewTabs.map(([name, badge]) => (
          <button key={name} className="flex items-center gap-[2px] whitespace-nowrap">
            {badge}
            {name}
            <span className="w-[6px] text-center">|</span>
          </button>
        ))}
        <button aria-label="Plan 1" className="h-[19px] w-[30px] border-b border-[#333] bg-white pl-[3px]">
          <PlanBadge />
        </button>
        <div className="ml-auto flex gap-[10px] pr-[7px]">
          <button aria-label="Previous tabs"><Svg className="h-[8px] w-[5px]" box="0 0 5 8"><path d="M4.500 1v6L1 4z" stroke="#333" /></Svg></button>
          <button aria-label="Next tabs"><Svg className="h-[8px] w-[5px]" box="0 0 5 8"><path d="M.5 1v6L4 4z" stroke="#333" /></Svg></button>
        </div>
      </div>
      <div className={`flex h-[20px] items-center gap-[2px] bg-[#f0f0f0] pl-[2px] text-[10px] text-[#777] ${ui}`}>
        <span className="w-[590px] text-[#222]">For Help, press F1</span>
        <span className="h-[16px] flex-1 border border-[#b5b5b5]" />
        <span className="h-[16px] w-[23px] border border-[#b5b5b5] text-center leading-[14px]">CAP</span>
        <span className="h-[16px] w-[27px] border border-[#b5b5b5] text-center leading-[14px]">NUM</span>
        <span className="h-[16px] w-[27px] border border-[#b5b5b5] text-center leading-[14px]">SCRL</span>
        <span className="h-[16px] w-[15px] border border-[#b5b5b5]" />
      </div>
      <div className="flex h-[19px] items-stretch gap-[12px] pl-[2px] text-xs text-[#757575]">
        <button className="w-[117px] border border-b-0 border-[#8fb8da] bg-[#54a8e8] pl-[3px] text-left text-[#4d6a82]">Output Window</button>
        <button className="w-[134px] border border-b-0 border-[#b5b5b5] bg-[#f3f3f3] pl-[4px] text-left">Background tasks</button>
      </div>
    </footer>
  )
}

function SurveyMenu() {
  return (
    <div role="menu" aria-label="Survey" className="absolute top-[48px] bottom-0 left-[314px] z-10 flex w-[238px] flex-col border border-[#8d8d8d] bg-[#fcfcfc]">
      <MenuItem label={<>[ Surve<u>y</u> ]</>} className="h-[28px] shrink-0" />
      <Separator />
      <div className="min-h-0 flex-1 overflow-hidden">
        <div className="flex h-[567px] flex-col">
          {surveyItems.map((item) => (
            <MenuItem key={item.label} {...item} className="flex-1" />
          ))}
        </div>
      </div>
      <div className="flex h-[10px] shrink-0 items-center justify-center bg-[#f0f0f0]">
        <Svg className="h-[3px] w-[5px]" box="0 0 5 3"><path d="M0 0h5L2.500 3z" fill="#222" /></Svg>
      </div>
    </div>
  )
}

function SnapPopup() {
  return (
    <div role="menu" className={`absolute top-[235px] left-[693px] w-[70px] rounded-sm border border-[#fafafa] bg-[#f0f0f0] pt-[5px] text-[10px] leading-[15px] text-[#222] ${ui}`}>
      {["Auto", "", "", "", "", "User", "", "Edit chain", "Run chain"].map((label, i) => (
        <button key={i} role="menuitem" className="flex h-[15px] w-full items-center pl-[2px] text-left whitespace-nowrap">
          <span className="w-[51px]">{label}</span>
          {label && <Svg className="h-[7px] w-[4px]" box="0 0 4 7"><path d="M0 0l4 3.500L0 7z" fill="#000" /></Svg>}
        </button>
      ))}
    </div>
  )
}

export default function App() {
  return (
    <div className="relative flex h-screen flex-col overflow-hidden border-t border-b border-l border-[#444] bg-[#f0f0f0] font-['Liberation_Sans',Arial,sans-serif]">
      <TitleBar />
      <MenuBar />
      <PropertyBar />
      <ToolBar />
      <SnapBar />
      <main className="flex min-h-0 flex-1">
        <DrawColumn />
        <div className="flex min-w-0 flex-1 flex-col">
          <Workspace />
          <Footer />
        </div>
        <EditColumn />
      </main>

      <SnapPopup />
      <SurveyMenu />
      <PopupMenu items={fieldItems} className="top-[83px] left-[552px] z-10 w-[186px]" />
      <PopupMenu items={utilityItems} className="top-[147px] left-[737px] z-10 w-[197px]" />
      <PopupMenu items={licensingItems} className="top-[252px] left-[534px] z-10 w-[203px]" />
      <Svg className="absolute top-[266px] left-[787px] z-20 h-[14px] w-[9px]" box="0 0 9 14">
        <path d="M.5 .5v10l2.500-2 2 4.500 1.500-.7-2-4.300h3.500z" fill="#fff" stroke="#000" />
      </Svg>
    </div>
  )
}
